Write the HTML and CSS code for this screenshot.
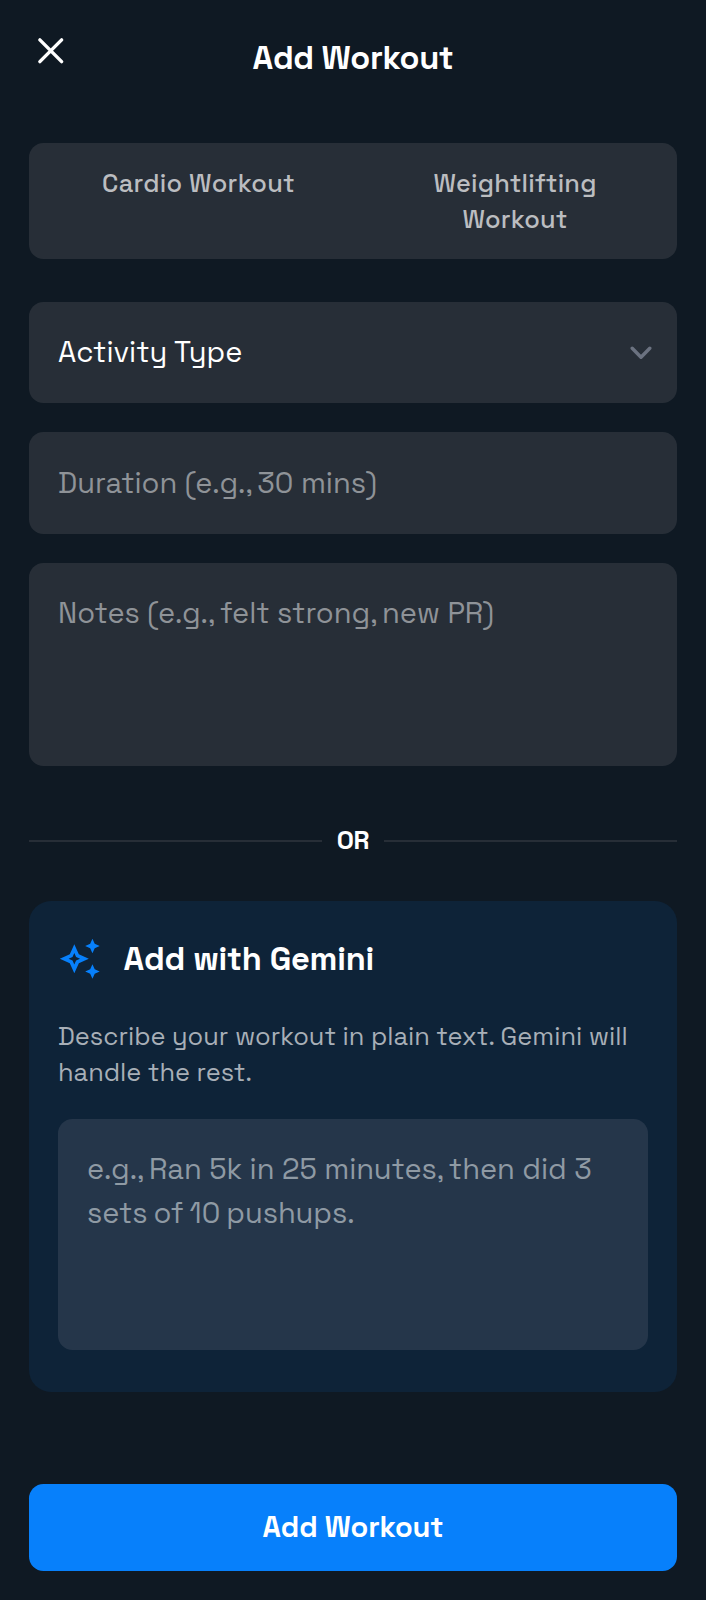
FILE: index.html
```html
<!DOCTYPE html>
<html lang="en">
<head>
<meta charset="utf-8">
<title>Add Workout</title>
<link rel="stylesheet" href="styles.css">
</head>
<body>
<main class="screen">
  <header class="header">
    <svg class="close" viewBox="0 0 24 24" aria-label="Close"><path d="M6 6 18 18M18 6 6 18"/></svg>
    <h1 class="title">Add Workout</h1>
  </header>

  <div class="tabs">
    <div class="tab tab-cardio">Cardio Workout</div>
    <div class="tab">Weightlifting<br>Workout</div>
  </div>

  <form class="form">
    <div class="field field-select">
      <span>Activity Type</span>
      <svg class="chevron" viewBox="0 0 22 14"><path d="M2.2 2.2 11 11.2 19.8 2.2"/></svg>
    </div>
    <div class="field field-input"><span>Duration (e.g.<span class="comma">,</span> 30 mins)</span></div>
    <div class="field field-notes">Notes (e.g.<span class="comma">,</span> felt strong<span class="comma">,</span> new PR)</div>
  </form>

  <div class="divider"><span class="or">OR</span></div>

  <section class="card">
    <div class="card-head">
      <svg class="sparkle" viewBox="0 0 24 24"><path d="M19 9l1.250-2.750L23 5l-2.750-1.250L19 1l-1.250 2.750L15 5l2.750 1.250zm0 6l-1.250 2.750L15 19l2.750 1.250L19 23l1.250-2.750L23 19l-2.750-1.250zm-7.500-5.500L9 4 6.500 9.500 1 12l5.500 2.500L9 20l2.500-5.500L17 12zm-1.510 3.490L9 15.170l-.990-2.180L5.830 12l2.180-.990L9 8.830l.990 2.180 2.170.990z"/></svg>
      <h2 class="card-title">Add with Gemini</h2>
    </div>
    <p class="description">Describe your workout in plain text. Gemini will<br>handle the rest.</p>
    <div class="prompt">e.g.<span class="comma">,</span> Ran 5k in 25 minutes<span class="comma">,</span> then did 3<br><span class="prompt-end">sets of 10 pushups.</span></div>
  </section>

  <button class="submit" type="button">Add Workout</button>
</main>
</body>
</html>
```
FILE: styles.css
```css
* { box-sizing: border-box; }

body {
  margin: 0;
  background: #0f1923;
  color: #fff;
  font-family: "Space Grotesk", Inter, sans-serif;
}

.screen {
  display: flex;
  flex-direction: column;
  height: 1600px;
  padding: 0 29px;
}

.header {
  display: grid;
  grid-template-columns: 43.5px 1fr 43.5px;
  height: 143.3px;
  padding-top: 28.7px;
}

.close {
  width: 43.5px;
  height: 43.5px;
  fill: none;
  stroke: #fff;
  stroke-width: 1.9;
  stroke-linecap: round;
}

.title {
  margin: 7.3px 0 0;
  font-size: 32.64px;
  font-weight: 700;
  letter-spacing: -0.36px;
  line-height: 45px;
  text-align: center;
}

.tabs {
  display: grid;
  grid-template-columns: 1fr 1fr;
  height: 115.7px;
  padding: 21.7px 3.6px 0 11.2px;
  border-radius: 14.5px;
  background: #272e37;
  color: #bbbdc0;
  font-size: 25.39px;
  font-weight: 500;
  line-height: 36.25px;
  text-align: center;
}

.tab {
  letter-spacing: 0.2px;
  white-space: nowrap;
}

.tab-cardio { letter-spacing: 0.3px; }

.form {
  display: flex;
  flex-direction: column;
  gap: 29px;
  margin-top: 43px;
}

.field {
  border-radius: 14.5px;
  background: #272e37;
  color: #8f9398;
  font-size: 29px;
  line-height: 43.5px;
  white-space: nowrap;
}

.field-select,
.field-input {
  display: flex;
  align-items: center;
  height: 101.3px;
  padding: 0 25.5px 0 29px;
}

.field-select {
  justify-content: space-between;
  padding-bottom: 2px;
  color: #fff;
}

.field-notes {
  height: 203px;
  padding: 28.5px 29px;
}

.comma { letter-spacing: -2.8px; }

.chevron {
  width: 22px;
  height: 14px;
  margin-top: 2px;
  fill: none;
  stroke: #6b7280;
  stroke-width: 3.4;
  stroke-linecap: round;
  stroke-linejoin: round;
}

.divider {
  display: flex;
  align-items: center;
  gap: 14.5px;
  height: 36px;
  margin-top: 57px;
}

.divider::before,
.divider::after {
  content: "";
  flex: 1;
  height: 2px;
  background: #272e37;
}

.or {
  padding-bottom: 2px;
  font-size: 25.39px;
  font-weight: 700;
  letter-spacing: -0.4px;
  line-height: 36px;
}

.card {
  height: 491px;
  margin-top: 42.5px;
  padding: 28.5px 29px 0;
  border-radius: 22px;
  background: #0e2338;
}

.card-head {
  display: flex;
  align-items: center;
  gap: 22px;
  height: 59px;
}

.sparkle {
  width: 43.5px;
  height: 43.5px;
  fill: #0780fb;
}

.card-title {
  margin: 0;
  font-size: 32.64px;
  font-weight: 700;
  letter-spacing: -0.22px;
  line-height: 50px;
}

.description {
  margin: 29.5px 0 28px;
  color: #a8afb7;
  font-size: 25.39px;
  line-height: 36.25px;
  white-space: nowrap;
}

.prompt {
  height: 231.5px;
  padding: 28.7px 29px;
  border-radius: 14.5px;
  background: #25364a;
  color: #8f9aa4;
  font-size: 29px;
  line-height: 43.5px;
  white-space: nowrap;
}

.prompt-end { word-spacing: -1.5px; }

.submit {
  height: 87px;
  margin-top: 92px;
  padding: 0 0 3px;
  border: 0;
  border-radius: 14.5px;
  background: #0780fb;
  color: #fff;
  font: inherit;
  font-size: 29px;
  font-weight: 700;
  letter-spacing: -0.1px;
}
```
